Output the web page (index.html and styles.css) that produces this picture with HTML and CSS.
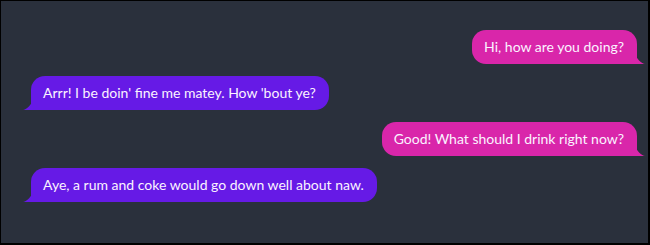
FILE: index.html
```html
<!DOCTYPE html>
<html lang="en">
<head>
<meta charset="utf-8">
<title>Chat</title>
<link rel="stylesheet" href="styles.css">
</head>
<body>
<div class="frame">
  <div class="chat">
    <div class="row row-end"><div class="bubble bubble-sent">Hi, how are you doing?</div></div>
    <div class="row row-start"><div class="bubble bubble-recv">Arrr! I be doin' fine me matey. How 'bout ye?</div></div>
    <div class="row row-end"><div class="bubble bubble-sent">Good! What should I drink right now?</div></div>
    <div class="row row-start"><div class="bubble bubble-recv">Aye, a rum and coke would go down well about naw.</div></div>
  </div>
</div>
</body>
</html>
```
FILE: styles.css
```css
html, body {
  margin: 0;
  padding: 0;
  background: #000;
}
.frame {
  width: 650px;
  height: 245px;
  box-sizing: border-box;
  border-style: solid;
  border-color: #000;
  border-width: 1px 2px 2px 1px;
  background: #2a303c;
  font-family: "Lato", "Open Sans", sans-serif;
}
.chat {
  display: flex;
  flex-direction: column;
  gap: 12px;
  padding: 29px 11px 0 30px;
}
.row {
  display: flex;
}
.row-end {
  justify-content: flex-end;
}
.row-start {
  justify-content: flex-start;
}
.bubble {
  position: relative;
  font-size: 14px;
  line-height: 20px;
  padding: 7px 13px 7px 12px;
  border-radius: 14px;
  color: #fbf3ff;
  white-space: nowrap;
}
.bubble::before {
  content: "";
  position: absolute;
  bottom: 0;
  width: 9px;
  height: 9px;
}
.bubble-sent {
  background: #d926aa;
  border-bottom-right-radius: 0;
}
.bubble-sent::before {
  right: -8px;
  background: #d926aa;
  clip-path: path("M9 9 L0 9 L0 0 C0 3 6 9 9 9 Z");
}
.bubble-recv {
  background: #661ae6;
  border-bottom-left-radius: 0;
}
.bubble-recv::before {
  left: -8px;
  background: #661ae6;
  clip-path: path("M0 9 L9 9 L9 0 C9 3 3 9 0 9 Z");
}
```
